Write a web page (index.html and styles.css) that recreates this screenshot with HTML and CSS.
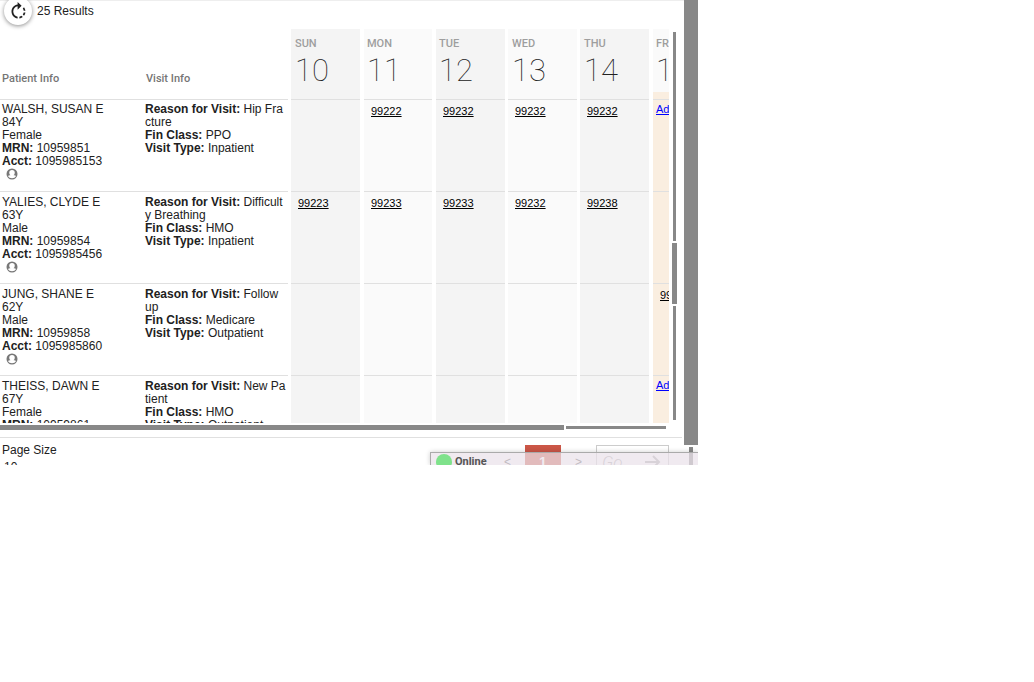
FILE: index.html
```
<!DOCTYPE html>
<html lang="en">
<head>
<meta charset="utf-8">
<title>Patient Visits</title>
<link rel="stylesheet" href="styles.css">
</head>
<body>
<svg class="defs" aria-hidden="true">
  <symbol id="person" viewBox="0 0 24 24">
    <circle cx="12" cy="12" r="11" fill="currentColor"/>
    <circle cx="12" cy="9.500" r="5.500" fill="#fff"/>
    <path fill="#fff" d="M4 16c2-1.500 5-2 8-2s6 .5 8 2c-1.500 3-4.500 4.500-8 4.500S5.500 19 4 16z"/>
  </symbol>
</svg>
<main class="panel">
  <div class="content">
    <header class="toolbar">
      <button class="refresh" type="button" aria-label="Refresh">
        <svg viewBox="0 0 24 24" width="21" height="21"><path d="M15.550 5.550L11 1v3.070C7.060 4.560 4 7.920 4 12s3.050 7.440 7 7.930v-2.020c-2.840-.48-5-2.940-5-5.910s2.160-5.430 5-5.910V10l4.550-4.450zM19.930 11c-.17-1.390-.72-2.730-1.620-3.890l-1.420 1.420c.54.75.88 1.600 1.020 2.470h2.020zM13 17.900v2.020c1.390-.17 2.740-.71 3.900-1.610l-1.440-1.440c-.75.54-1.590.89-2.460 1.030zm3.890-2.420l1.420 1.410c.9-1.160 1.450-2.500 1.620-3.890h-2.020c-.14.87-.48 1.720-1.020 2.480z" fill="#212121"/></svg>
      </button>
      <span>25 Results</span>
    </header>
    <div class="grid-area">
      <div class="viewport">
        <table class="visits">
          <colgroup><col class="c-info"><col class="c-info"><col class="c-day"><col class="c-day"><col class="c-day-wide"><col class="c-day"><col class="c-day"><col class="c-day"></colgroup>
          <thead>
            <tr>
              <th class="info">Patient Info</th>
              <th class="info">Visit Info</th>
              <th class="day dark">SUN<span class="date">10</span></th>
              <th class="day wide">MON<span class="date">11</span></th>
              <th class="day dark wide">TUE<span class="date">12</span></th>
              <th class="day">WED<span class="date">13</span></th>
              <th class="day dark">THU<span class="date">14</span></th>
              <th class="day wide today">FRI<span class="date">15</span></th>
            </tr>
          </thead>
          <tbody>
            <tr>
              <td>WALSH, SUSAN E<br>84Y<br>Female<br><b>MRN:</b> 10959851<br><b>Acct:</b> 1095985153<svg class="person"><use href="#person"/></svg></td>
              <td><b>Reason for Visit:</b> Hip Fracture<br><b>Fin Class:</b> PPO<br><b>Visit Type:</b> Inpatient</td>
              <td class="day dark"></td>
              <td class="day wide"><a href="#">99222</a></td>
              <td class="day dark wide"><a href="#">99232</a></td>
              <td class="day"><a href="#">99232</a></td>
              <td class="day dark"><a href="#">99232</a></td>
              <td class="day wide today add"><a href="#">Add</a></td>
            </tr>
            <tr>
              <td>YALIES, CLYDE E<br>63Y<br>Male<br><b>MRN:</b> 10959854<br><b>Acct:</b> 1095985456<svg class="person"><use href="#person"/></svg></td>
              <td><b>Reason for Visit:</b> Difficulty Breathing<br><b>Fin Class:</b> HMO<br><b>Visit Type:</b> Inpatient</td>
              <td class="day dark"><a href="#">99223</a></td>
              <td class="day wide"><a href="#">99233</a></td>
              <td class="day dark wide"><a href="#">99233</a></td>
              <td class="day"><a href="#">99232</a></td>
              <td class="day dark"><a href="#">99238</a></td>
              <td class="day wide today"></td>
            </tr>
            <tr>
              <td>JUNG, SHANE E<br>62Y<br>Male<br><b>MRN:</b> 10959858<br><b>Acct:</b> 1095985860<svg class="person"><use href="#person"/></svg></td>
              <td><b>Reason for Visit:</b> Follow up<br><b>Fin Class:</b> Medicare<br><b>Visit Type:</b> Outpatient</td>
              <td class="day dark"></td>
              <td class="day wide"></td>
              <td class="day dark wide"></td>
              <td class="day"></td>
              <td class="day dark"></td>
              <td class="day wide today"><a href="#">99</a></td>
            </tr>
            <tr>
              <td>THEISS, DAWN E<br>67Y<br>Female<br><b>MRN:</b> 10959861</td>
              <td><b>Reason for Visit:</b> New Patient<br><b>Fin Class:</b> HMO<br><b>Visit Type:</b> Outpatient</td>
              <td class="day dark"></td>
              <td class="day wide"></td>
              <td class="day dark wide"></td>
              <td class="day"></td>
              <td class="day dark"></td>
              <td class="day wide today add"><a href="#">Add</a></td>
            </tr>
          </tbody>
        </table>
      </div>
      <div class="vscroll" aria-hidden="true"><i class="line upper"></i><i class="thumb"></i><i class="line lower"></i></div>
    </div>
    <div class="hscroll" aria-hidden="true"><i class="thumb"></i><i class="line"></i></div>
    <footer class="footer">
      <div class="page-size">
        <label for="size">Page Size</label>
        <select id="size"><option>10</option></select>
      </div>
      <nav class="pager" aria-label="Pages">
        <button class="step" type="button">&lt;</button>
        <button class="current" type="button">1</button>
        <button class="step" type="button">&gt;</button>
        <button class="go" type="button">Go
          <svg viewBox="0 0 16 14" width="16" height="14"><path d="M0 7h14M8 1l6 6-6 6" fill="none" stroke="currentColor" stroke-width="2"/></svg>
        </button>
      </nav>
    </footer>
  </div>
  <div class="page-scroll" aria-hidden="true"><i class="thumb"></i><i class="line"></i></div>
  <div class="status"><i class="dot"></i>Online</div>
</main>
</body>
</html>
```
FILE: styles.css
```
* { box-sizing: border-box; }

body {
  margin: 0;
  background: #fff;
  color: #212121;
  font: 12px/13px "Liberation Sans", Arial, sans-serif;
}

button, select {
  margin: 0;
  padding: 0;
  border: 0;
  background: none;
  color: inherit;
  font: inherit;
}

.defs { display: none; }

.panel {
  position: relative;
  display: flex;
  width: 67.5vw;
  height: 68.2vh;
  overflow: hidden;
}

.content {
  display: flex;
  flex: 1;
  flex-direction: column;
  min-width: 0;
  border-top: 1px solid #eee;
}

.toolbar {
  display: flex;
  flex: none;
  align-items: center;
  gap: 5px;
  height: 28px;
  padding: 0 4px 8px;
}

.refresh {
  display: grid;
  flex: none;
  place-items: center;
  width: 28px;
  height: 28px;
  border-radius: 50%;
  background: #fff;
  box-shadow: 0 1px 4px rgba(0, 0, 0, .45);
}

.grid-area {
  display: flex;
  flex: 1;
  min-height: 0;
}

.viewport {
  flex: 1;
  min-width: 0;
  overflow: hidden;
}

.visits {
  width: 721px;
  table-layout: fixed;
  border-collapse: separate;
  border-spacing: 0;
}

.c-info { width: 144px; }
.c-day { width: 72px; }
.c-day-wide { width: 73px; }

th {
  height: 70px;
  padding: 0;
  color: #757575;
  font: 500 11px/13px Roboto, sans-serif;
  text-align: left;
  vertical-align: top;
}

th.info { padding: 43px 2px 0; }

td {
  height: 92px;
  padding: 4px 1px 0 2px;
  box-shadow: inset 0 1px #e0e0e0;
  vertical-align: top;
  word-break: break-all;
}

tr + tr td { padding-top: 5px; }
td + td { padding-left: 1px; }

.day {
  border-left: 3px solid #fff;
  background: #fafafa;
}

.day.wide { border-left-width: 4px; }
.day.dark { background: #f4f4f4; }
tr td.day { padding: 6px 0 0 7px; }
tr td.add { padding: 4px 0 0 3px; }

th.day {
  padding: 8px 0 0 4px;
  color: #9e9e9e;
}

th.day.wide { padding-left: 3px; }

td.day.today { background: #faeee0; }
th.today { background: linear-gradient(#fafafa 63px, #faeee0 63px); }

.date {
  display: block;
  color: #212121;
  font: 100 31px/36px Roboto, sans-serif;
  margin-top: 3px;
}

.day a {
  color: #000;
  font-size: 11px;
}

.day.add a { color: #00f; }

.person {
  display: block;
  width: 12px;
  height: 12px;
  margin: 0 4px;
  color: #777;
}

.line, .thumb {
  display: block;
  background: #888;
}

.vscroll {
  display: flex;
  flex-direction: column;
  align-items: center;
  gap: 2px;
  width: 15px;
  padding: 3px 6px 3px 2px;
}

.vscroll .line { width: 3px; }
.vscroll .upper { flex: 209; }
.vscroll .lower { flex: 114; }
.vscroll .thumb { width: 5px; height: 61px; }

.hscroll {
  display: flex;
  flex: none;
  align-items: center;
  gap: 2px;
  height: 9px;
  padding-right: 18px;
}

.hscroll .thumb { flex: 564; height: 5px; }
.hscroll .line { flex: 100; height: 3px; }

.footer {
  display: flex;
  flex: none;
  justify-content: space-between;
  height: 28px;
  margin: 5px 2px 0 0;
  padding-right: 13px;
  border-top: 1px solid #e0e0e0;
}

.page-size {
  display: flex;
  flex-direction: column;
  align-items: flex-start;
  gap: 2px;
  padding: 6px 2px 0;
}

.page-size select {
  flex: none;
  appearance: none;
  height: 16px;
  padding-left: 2px;
}

.pager {
  display: flex;
  align-items: flex-start;
  height: 34px;
  padding-top: 7px;
}

.pager button { height: 34px; }
.step { width: 35px; color: #555; }

.pager .current {
  width: 36px;
  background: #cb5647;
  color: #fff;
  font-size: 14px;
  font-weight: bold;
}

.pager .go {
  display: flex;
  align-items: center;
  justify-content: space-between;
  width: 73px;
  padding: 0 7px 0 5px;
  border: 1px solid #ccc;
  color: #aaa;
  font: italic 300 17px/18px Roboto, sans-serif;
}

.page-scroll {
  display: flex;
  flex-direction: column;
  align-items: center;
  gap: 2px;
  width: 14px;
}

.page-scroll .thumb { flex: 1; width: 100%; }
.page-scroll .line { width: 4px; height: 18px; }

/* Presence bar floating over the page's lower right corner */
.status {
  position: absolute;
  right: 0;
  bottom: 0;
  display: flex;
  align-items: flex-start;
  gap: 3px;
  width: 268px;
  height: 13px;
  padding: 1px 0 0 5px;
  border: solid #aaa;
  border-width: 1px 0 0 1px;
  background: rgba(234, 226, 234, .72);
  box-shadow: 0 0 5px rgba(0, 0, 0, .2);
  color: #555;
  font: bold 11px/16px Roboto, sans-serif;
}

.dot {
  flex: none;
  width: 16px;
  height: 16px;
  border-radius: 50%;
  background: #7fe28b;
}
```
